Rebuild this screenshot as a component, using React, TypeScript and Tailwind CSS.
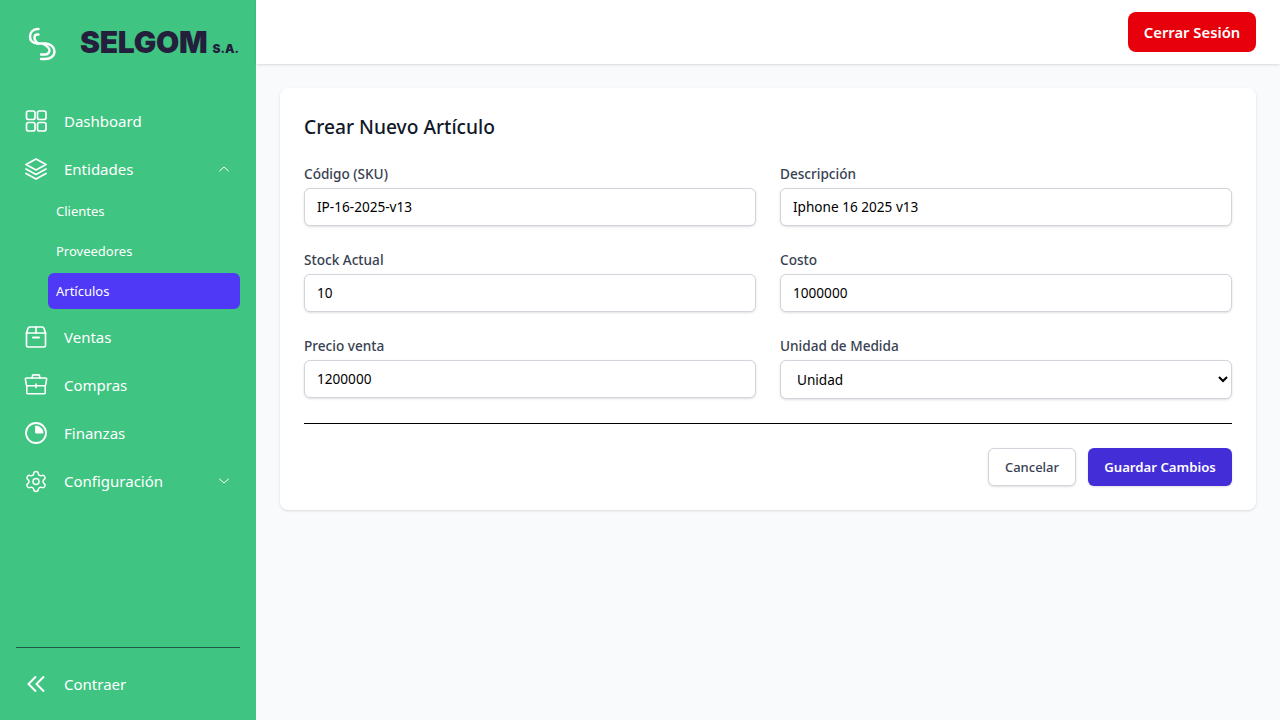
import React from "react";
import { Settings } from "lucide-react";

const S = { fill: "none", stroke: "currentColor", strokeWidth: 1.7, strokeLinecap: "round", strokeLinejoin: "round" } as const;

function Dash() {
  return (
    <svg width="24" height="24" viewBox="0 0 24 24" {...S}>
      <rect x="2.5" y="2" width="8.5" height="8.5" rx="2" />
      <rect x="13.5" y="2" width="8.5" height="8.5" rx="2" />
      <rect x="2.5" y="13.5" width="8.5" height="8.5" rx="2" />
      <rect x="13.5" y="13.5" width="8.5" height="8.5" rx="2" />
    </svg>
  );
}
function Layers() {
  return (
    <svg width="24" height="24" viewBox="0 0 24 24" {...S}>
      <path d="M12 2 22 7.5 12 13 2 7.5z" />
      <path d="M2 12l10 5.5L22 12" />
      <path d="M2 16.5 12 22l10-5.5" />
    </svg>
  );
}
function Box() {
  return (
    <svg width="24" height="24" viewBox="0 0 24 24" {...S}>
      <path d="M2.5 8 4 3.5A2.2 2.2 0 0 1 6 2h12a2.2 2.2 0 0 1 2 1.5L21.5 8" />
      <path d="M2.5 8h19v12.5a1.5 1.5 0 0 1-1.5 1.5H4a1.5 1.5 0 0 1-1.5-1.5z" />
      <path d="M12 2v6" />
      <path d="M9 12.5h6" strokeWidth="2" />
    </svg>
  );
}
function Case() {
  return (
    <svg width="26" height="24" viewBox="0 1 26 24" {...S}>
      <path d="M9 5.5V3.5A1.5 1.5 0 0 1 10.5 2h5A1.5 1.5 0 0 1 17 3.5v2" />
      <path d="M2.5 5.5h21a1 1 0 0 1 1 1.2L23.5 12.5a1.5 1.5 0 0 1-1.5 1.3H4a1.5 1.5 0 0 1-1.5-1.3L1.5 6.7a1 1 0 0 1 1-1.2z" />
      <path d="M3 14v7A1.5 1.5 0 0 0 4.5 22.5h17A1.5 1.5 0 0 0 23 21v-7" />
      <path d="M13 12v4" />
    </svg>
  );
}
function Pie() {
  return (
    <svg width="24" height="24" viewBox="0 0 24 24" {...S} strokeWidth={1.8}>
      <circle cx="12" cy="12" r="10" />
      <path d="M12 5A7 7 0 0 1 19 12H12z" fill="currentColor" strokeWidth="1" />
    </svg>
  );
}
function Chev({ up }: { up?: boolean }) {
  return (
    <svg width="16" height="16" viewBox="0 0 16 16" {...S} strokeWidth={1}>
      <path d={up ? "M3.5 10 8 6l4.5 4" : "M3.5 6 8 10l4.5-4"} />
    </svg>
  );
}

function Item({ icon, label, right }: { icon: React.ReactNode; label: string; right?: React.ReactNode }) {
  return (
    <div className="flex h-12 items-center px-6">
      <span className="flex w-6 shrink-0 justify-center">{icon}</span>
      <span className="ml-4 text-[15px]">{label}</span>
      {right && <span className="ml-auto">{right}</span>}
    </div>
  );
}

function Field({ label, value }: { label: string; value: string }) {
  return (
    <div>
      <label className="mb-1 block text-[13.6px] font-medium leading-5 text-[#374151]">{label}</label>
      <input
        readOnly
        value={value}
        className="block h-[38px] w-full rounded-md border border-[#d1d5db] bg-white px-3 pb-0.5 text-[13.6px] text-black shadow-sm outline-none"
      />
    </div>
  );
}

export default function App() {
  return (
    <div className="flex h-[720px] w-[1280px] overflow-hidden bg-[#f9fafb] font-['Noto_Sans',sans-serif]">
      <aside className="flex w-64 shrink-0 flex-col bg-[#40c482] text-white">
        <div className="flex h-[88px] items-center pl-[26px]">
          <svg width="32" height="38" viewBox="26 24 32 38" fill="none" stroke="white" strokeWidth="2.4" strokeLinecap="round" strokeLinejoin="round">
            <path d="M38.5 28H37.5C33 28 30 31.5 30 35.5C30 39.5 33 42 37 42.5H46C51 43 54.5 46.5 54.5 50.5C54.5 55 50.5 58 45 58H41" />
            <path d="M38.5 33.5H37.5C35.5 33.5 34.5 35 34.5 36.5C34.5 39 36 41 38.5 42.5" />
            <path d="M43 43C47.5 45 49.5 47.5 49.5 49.5C49.5 51.5 47.5 53.5 45 53.5H41" />
          </svg>
          <span className="ml-[22px] mb-1 font-['Inter',sans-serif] text-[30px] font-black leading-none tracking-[-0.25px] text-[#231f3d]">SELGOM</span>
          <span className="ml-[5px] mt-[10px] font-['Inter',sans-serif] text-[12px] font-black leading-none text-[#231f3d]">S.A.</span>
        </div>
        <nav className="mt-[9px] flex flex-col">
          <Item icon={<Dash />} label="Dashboard" />
          <Item icon={<Layers />} label="Entidades" right={<Chev up />} />
          <div className="flex flex-col gap-1 pb-1 pl-12 pr-4 text-[13px]">
            <div className="flex h-9 items-center rounded-md px-2 pt-px">Clientes</div>
            <div className="flex h-9 items-center rounded-md px-2 pt-px">Proveedores</div>
            <div className="flex h-9 items-center rounded-md bg-[#4f39f6] px-2 pt-px">Artículos</div>
          </div>
          <Item icon={<Box />} label="Ventas" />
          <Item icon={<Case />} label="Compras" />
          <Item icon={<Pie />} label="Finanzas" />
          <Item icon={<Settings size={27} strokeWidth={1.45} />} label="Configuración" right={<Chev />} />
        </nav>
        <div className="mt-auto mx-4 border-t border-[#1f5b45]" />
        <div className="flex h-[72px] items-center px-6">
          <svg className="w-6" width="24" height="24" viewBox="0 0 24 24" fill="none" stroke="white" strokeWidth="2">
            <path d="M12 4.5 4.5 12 12 19.5M20 4.5 12.5 12 20 19.5" />
          </svg>
          <span className="ml-4 text-[15px]">Contraer</span>
        </div>
      </aside>
      <div className="flex min-w-0 flex-1 flex-col">
        <header className="flex h-16 shrink-0 items-center justify-end bg-white px-6 shadow">
          <button className="h-10 w-32 rounded-lg bg-[#e7000b] text-[14.8px] font-semibold text-white">Cerrar Sesión</button>
        </header>
        <main className="p-6">
          <div className="rounded-lg bg-white p-6 shadow">
            <h1 className="mt-px text-[19.2px] font-medium leading-7 text-[#111827]">Crear Nuevo Artículo</h1>
            <div className="mt-[23px] grid grid-cols-2 gap-x-6 gap-y-6">
              <Field label="Código (SKU)" value="IP-16-2025-v13" />
              <Field label="Descripción" value="Iphone 16 2025 v13" />
              <Field label="Stock Actual" value="10" />
              <Field label="Costo" value="1000000" />
              <Field label="Precio venta" value="1200000" />
              <div>
                <label className="mb-1 block text-[13.6px] font-medium leading-5 text-[#374151]">Unidad de Medida</label>
                <select className="block h-[39px] w-full rounded-md border border-[#d1d5db] bg-white px-3 text-[13.6px] text-black shadow-sm outline-none" defaultValue="Unidad">
                  <option>Unidad</option>
                </select>
              </div>
            </div>
            <div className="mt-6 border-t border-black" />
            <div className="mt-6 flex justify-end gap-3">
              <button className="h-[38px] w-[88px] rounded-md border border-[#d1d5db] bg-white pt-px text-[13px] font-medium text-[#374151] shadow-sm">Cancelar</button>
              <button className="h-[38px] w-[144px] rounded-md bg-[#432dd7] pt-px text-[13.2px] font-semibold text-white shadow-sm">Guardar Cambios</button>
            </div>
          </div>
        </main>
      </div>
    </div>
  );
}
